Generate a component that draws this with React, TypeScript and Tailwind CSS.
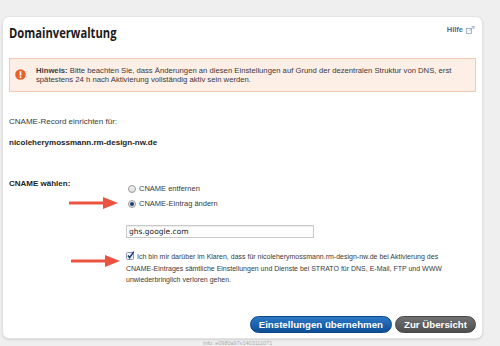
import React from "react";

function Arrow({ className }: { className?: string }) {
  return (
    <svg width="50" height="14" viewBox="0 0 50 14" className={className}>
      <line x1="1" y1="7" x2="38" y2="7" stroke="#e9533f" strokeWidth="3" strokeLinecap="round" />
      <polygon points="34,1 49,7 34,13" fill="#e9533f" />
    </svg>
  );
}

function Radio({ checked }: { checked?: boolean }) {
  return (
    <span className="w-[8px] h-[8px] rounded-full border border-[#9a9a9a] bg-gradient-to-b from-[#f4f4f4] to-[#dcdcdc] flex items-center justify-center shrink-0">
      {checked && <span className="w-[4px] h-[4px] rounded-full bg-[#1f3f6e]" />}
    </span>
  );
}

export default function App() {
  return (
    <div
      className="w-[500px] h-[346px] overflow-hidden bg-[#efefef] pt-[16px] pl-[2px] text-[#333]"
      style={{ fontFamily: '"Liberation Sans", Arial, sans-serif' }}
    >
      <div className="w-[481px] h-[323px] bg-white rounded-[7px] border border-[#e2e2e2] shadow-[0_1px_2px_rgba(0,0,0,0.12)] px-[6px] pt-[7px] flex flex-col">
        {/* header */}
        <div className="flex items-start justify-between">
          <h1
            className="text-[14px] leading-[18px] font-bold text-[#1b1b1b] origin-left scale-x-[0.8]"
            style={{ fontFamily: '"Open Sans", sans-serif' }}
          >
            Domainverwaltung
          </h1>
          <a className="flex items-center gap-[3px] text-[7.5px] leading-[10px] font-bold text-[#4a6b9d] mr-[1px] mt-[1px]">
            Hilfe
            <svg width="9" height="8" viewBox="0 0 9 8" fill="none" stroke="#8ea2c2" strokeWidth="0.8">
              <rect x="0.5" y="2.5" width="5" height="5" />
              <path d="M3.5 5 L8 0.5 M5.5 0.5 H8 V3" />
            </svg>
          </a>
        </div>

        {/* hint */}
        <div className="mt-[16px] flex items-start gap-[6px] border border-[#f3c9b3] bg-[#fdeee6] pl-[5px] py-[7px] text-[7.7px] leading-[9px] text-[#3a3a3a]">
          <svg width="11" height="11" viewBox="0 0 11 11" className="shrink-0 mt-[3px]">
            <circle cx="5.5" cy="5.5" r="5.3" fill="#e8612b" />
            <rect x="4.6" y="2.2" width="1.8" height="4.3" rx="0.6" fill="#fff" />
            <rect x="4.6" y="7.3" width="1.8" height="1.6" rx="0.5" fill="#fff" />
          </svg>
          <p className="ml-[4px]">
            <b>Hinweis:</b> Bitte beachten Sie, dass Änderungen an diesen Einstellungen auf Grund der dezentralen Struktur von DNS, erst spätestens 24 h nach Aktivierung vollständig aktiv sein werden.
          </p>
        </div>

        <p className="mt-[25px] text-[8px] leading-[10px] text-[#3a3a3a]">CNAME-Record einrichten für:</p>
        <p className="mt-[11px] text-[8px] leading-[10px] font-bold text-[#1e1e1e]">nicoleherymossmann.rm-design-nw.de</p>

        {/* form */}
        <div className="mt-[31px] grid grid-cols-[117px_1fr]">
          <div className="flex flex-col">
            <p className="text-[8px] leading-[10px] font-bold text-[#1e1e1e]">CNAME wählen:</p>
            <Arrow className="mt-[7px] ml-[60px]" />
            <Arrow className="mt-[44px] ml-[62px]" />
          </div>
          <div className="pt-[5px] flex flex-col text-[7.5px] leading-[10px] text-[#3a3a3a]">
            <label className="flex items-center gap-[3px] ml-[2px]">
              <Radio />
              CNAME entfernen
            </label>
            <label className="mt-[5px] flex items-center gap-[3px] ml-[2px]">
              <Radio checked />
              CNAME-Eintrag ändern
            </label>
            <div
              className="mt-[16px] w-[188px] h-[13px] border border-[#c9c9c9] shadow-[inset_0_1px_1px_rgba(0,0,0,0.08)] px-[2px] flex items-center text-[7.5px] text-[#222]"
              style={{ fontFamily: '"DejaVu Sans", Verdana, sans-serif' }}
            >
              ghs.google.com
            </div>
            <p className="mt-[13px] w-[335px] text-[7px] leading-[11.5px] text-[#3a3a3a]">
              <svg width="9" height="9" viewBox="0 0 9 9" className="inline-block align-[-1px] mr-[2px]">
                <rect x="0.5" y="1.5" width="7" height="7" rx="1" fill="#f2f4f8" stroke="#8d97a8" />
                <path d="M2 4.5 L3.6 6.6 L7.8 0.6" fill="none" stroke="#1d3f78" strokeWidth="1.6" />
              </svg>
              Ich bin mir darüber im Klaren, dass für nicoleherymossmann.rm-design-nw.de bei Aktivierung des CNAME-Eintrages sämtliche Einstellungen und Dienste bei STRATO für DNS, E-Mail, FTP und WWW unwiederbringlich verloren gehen.
            </p>
          </div>
        </div>

        {/* buttons */}
        <div className="mt-auto mb-[5px] flex justify-end gap-[3px]">
          <button className="h-[17px] px-[8px] rounded-full bg-gradient-to-b from-[#2c78c6] to-[#0c4f96] border border-[#0b4686] text-white text-[9.7px] font-bold leading-none">
            Einstellungen übernehmen
          </button>
          <button className="h-[17px] px-[8px] rounded-full bg-gradient-to-b from-[#717171] to-[#4e4e4e] border border-[#474747] text-white text-[9.7px] font-bold leading-none">
            Zur Übersicht
          </button>
        </div>
      </div>
      <p className="ml-[201px] mt-[1px] text-[5.5px] leading-[7px] text-[#aaa]">Info: e0980a97v1403111071</p>
    </div>
  );
}
